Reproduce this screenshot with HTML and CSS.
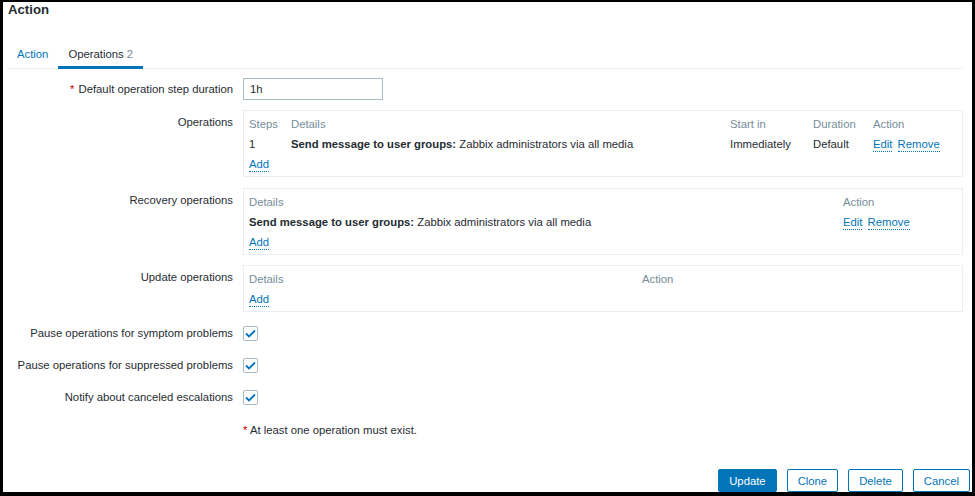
FILE: index.html
```html
<!DOCTYPE html>
<html>
<head>
<meta charset="utf-8">
<link rel="stylesheet" href="styles.css">
</head>
<body>
<div class="frame">
  <h1 class="title">Action</h1>
  <div class="tabs">
    <span class="tab">Action</span>
    <span class="tab active">Operations <span class="count">2</span></span>
  </div>
  <div class="form">
    <div class="label center"><span class="req">*</span><span>Default operation step duration</span></div>
    <div class="field center"><input class="text-input" type="text" value="1h"></div>

    <div class="label top">Operations</div>
    <div class="field">
      <div class="box grid-ops">
        <div class="th">Steps</div><div class="th">Details</div><div class="th">Start in</div><div class="th">Duration</div><div class="th">Action</div>
        <div class="td">1</div>
        <div class="td"><b>Send message to user groups:</b> Zabbix administrators via all media</div>
        <div class="td">Immediately</div>
        <div class="td">Default</div>
        <div class="td"><a class="link">Edit</a> <a class="link">Remove</a></div>
        <div class="td full"><a class="link">Add</a></div>
      </div>
    </div>

    <div class="label top shift">Recovery operations</div>
    <div class="field shift">
      <div class="box grid-rec">
        <div class="th">Details</div><div class="th">Action</div>
        <div class="td"><b>Send message to user groups:</b> Zabbix administrators via all media</div>
        <div class="td"><a class="link">Edit</a> <a class="link">Remove</a></div>
        <div class="td full"><a class="link">Add</a></div>
      </div>
    </div>

    <div class="label top">Update operations</div>
    <div class="field">
      <div class="box grid-upd">
        <div class="th">Details</div><div class="th">Action</div>
        <div class="td full"><a class="link">Add</a></div>
      </div>
    </div>

    <div class="label center">Pause operations for symptom problems</div>
    <div class="field center"><span class="checkbox"><svg width="11" height="9" viewBox="0 0 11 9"><path d="M1 4.5 L4 7.5 L10 1.5" fill="none" stroke="#0275b8" stroke-width="1.8"/></svg></span></div>

    <div class="label center">Pause operations for suppressed problems</div>
    <div class="field center"><span class="checkbox"><svg width="11" height="9" viewBox="0 0 11 9"><path d="M1 4.5 L4 7.5 L10 1.5" fill="none" stroke="#0275b8" stroke-width="1.8"/></svg></span></div>

    <div class="label center">Notify about canceled escalations</div>
    <div class="field center"><span class="checkbox"><svg width="11" height="9" viewBox="0 0 11 9"><path d="M1 4.5 L4 7.5 L10 1.5" fill="none" stroke="#0275b8" stroke-width="1.8"/></svg></span></div>

    <div class="label"></div>
    <div class="field note"><span class="req">*</span> At least one operation must exist.</div>
  </div>
  <div class="buttons">
    <button class="btn primary">Update</button>
    <button class="btn">Clone</button>
    <button class="btn">Delete</button>
    <button class="btn">Cancel</button>
  </div>
</div>
</body>
</html>
```
FILE: styles.css
```css
html, body {
  margin: 0;
  padding: 0;
  background: #000;
}
body {
  width: 975px;
  height: 496px;
  overflow: hidden;
  font-family: "Liberation Sans", Arial, sans-serif;
  font-size: 11.3px;
  color: #1f2c33;
}
.frame {
  background: #fff;
  margin: 2px 3px 0 3px;
  height: 490px;
  overflow: hidden;
  position: relative;
}
.title {
  margin: 0;
  padding-left: 5px;
  font-size: 13.2px;
  line-height: 16px;
  font-weight: bold;
  color: #1f2c33;
}
.tabs {
  margin-top: 26px;
  margin-left: 4px;
  margin-right: 9px;
  border-bottom: 1px solid #ebeef0;
  display: flex;
  height: 24px;
  align-items: flex-end;
}
.tab {
  padding: 0 10px 4px;
  line-height: 16px;
  color: #0275b8;
  border-bottom: 3px solid transparent;
  margin-bottom: -1px;
}
.tab.active {
  color: #1f2c33;
  border-bottom-color: #0275b8;
}
.count { color: #768d99; }
.form {
  display: grid;
  grid-template-columns: 230px 720px;
  column-gap: 10px;
  row-gap: 10px;
  margin-top: 9px;
}
.label {
  text-align: right;
  line-height: 16px;
}
.label.center, .field.center {
  display: flex;
  align-items: center;
  justify-content: flex-end;
  min-height: 22px;
}
.field.center { justify-content: flex-start; }
.label.top { padding-top: 4px; }
.shift { margin-top: 1px; }
.req { color: #d40000; }
.label .req { margin-right: 4px; }
.text-input {
  box-sizing: border-box;
  width: 140px;
  height: 22px;
  border: 1px solid #acbbc2;
  padding: 0 6px;
  font-family: inherit;
  font-size: 11.3px;
  color: #1f2c33;
  margin: 0;
  outline: none;
}
.box {
  border: 1px solid #ebeef0;
  padding: 3px 7px 2px 5px;
  display: grid;
}
.grid-ops { grid-template-columns: 42px 439px 83px 60px 82px; }
.grid-rec { grid-template-columns: 594px 112px; }
.grid-upd { grid-template-columns: 393px 313px; }
.th, .td {
  line-height: 20px;
  height: 20px;
  white-space: nowrap;
}
.th { color: #768d99; }
.td b { font-weight: bold; }
.full { grid-column: 1 / -1; }
.link {
  color: #0275b8;
  border-bottom: 1px dotted #0275b8;
  line-height: 14px;
  display: inline-block;
  margin-right: 2px;
}
.checkbox {
  box-sizing: border-box;
  width: 15px;
  height: 15px;
  border: 1px solid #acbbc2;
  border-radius: 2px;
  display: flex;
  align-items: center;
  justify-content: center;
}
.note {
  line-height: 24px;
}
.buttons {
  display: flex;
  justify-content: flex-end;
  gap: 10px;
  margin-top: 27px;
  margin-right: 2px;
}
.btn {
  box-sizing: border-box;
  height: 23px;
  padding: 0 10px;
  border: 1px solid #0275b8;
  border-radius: 2px;
  background: #fff;
  color: #0275b8;
  font-family: inherit;
  font-size: 11.3px;
  margin: 0;
}
.btn.primary {
  background: #0275b8;
  color: #fff;
}
```
